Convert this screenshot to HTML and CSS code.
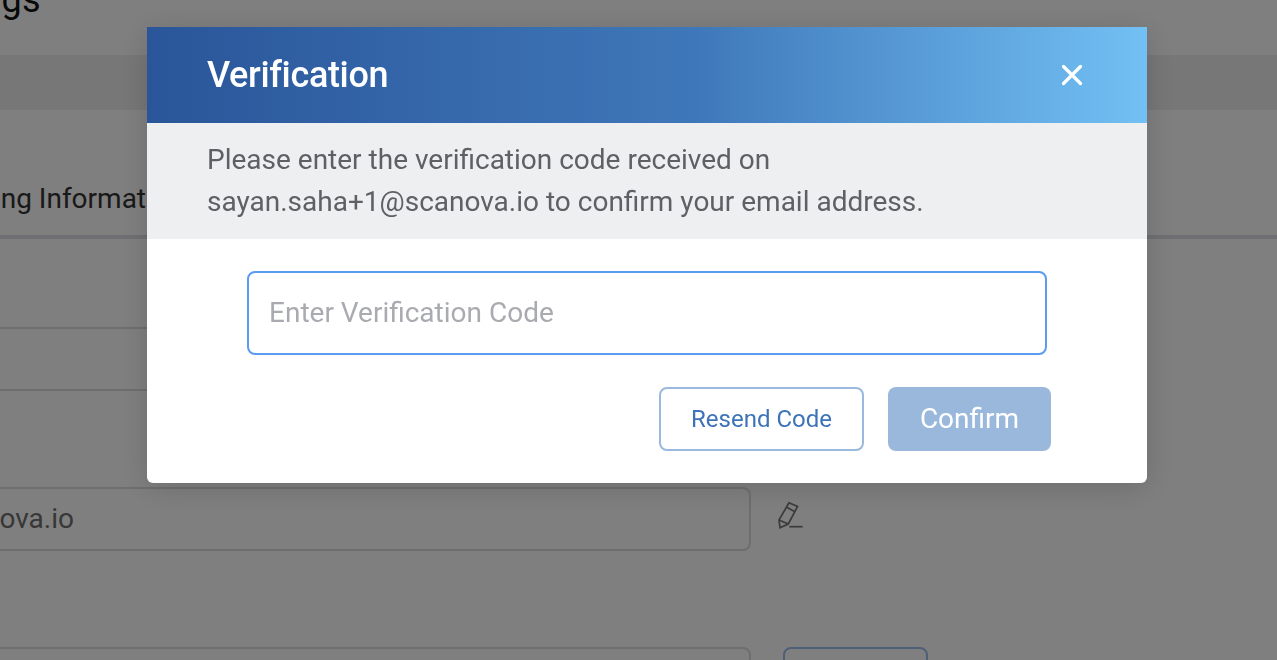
FILE: index.html
```html
<!DOCTYPE html>
<html lang="en">
<head>
  <meta charset="UTF-8">
  <title>Verification</title>
  <link rel="stylesheet" href="styles.css">
</head>
<body>
  <div class="page">
    <h1 class="page-title">Settings</h1>
    <div class="band"></div>
    <div class="tabs"><span class="tab">Billing Information</span></div>
    <div class="fields">
      <div class="field-row">
        <div class="field"></div>
      </div>
      <div class="field-row">
        <div class="field">sayan.saha+1@scanova.io</div>
        <svg class="pencil" viewBox="0 0 26 28" width="26" height="28" fill="none" stroke="#767676" stroke-width="1.7">
          <path d="M11 0.8 L19.5 4.5 L10.3 22 L2 25.8 L1 18 Z"/>
          <path d="M8.7 5.3 L17 9.7"/>
          <path d="M1 18 L10.3 22"/>
          <path d="M11.3 24.7 H24.7"/>
        </svg>
      </div>
      <div class="field-row">
        <div class="field"></div>
        <div class="page-btn"></div>
      </div>
    </div>
  </div>

  <div class="scrim"></div>

  <div class="modal">
    <div class="modal-header">
      <h2 class="modal-title">Verification</h2>
      <svg class="close-icon" viewBox="0 0 22 22" width="22" height="22" stroke="#fff" stroke-width="3.2" stroke-linecap="round">
        <path d="M2.5 2.5 L19.5 19.5 M19.5 2.5 L2.5 19.5"/>
      </svg>
    </div>
    <div class="modal-info">
      Please enter the verification code received on<br>
      sayan.saha+1@scanova.io to confirm your email address.
    </div>
    <div class="modal-body">
      <input class="code-input" type="text" placeholder="Enter Verification Code">
      <div class="modal-actions">
        <button class="btn btn-outline">Resend Code</button>
        <button class="btn btn-solid">Confirm</button>
      </div>
    </div>
  </div>
</body>
</html>
```

FILE: styles.css
```css
* {
  margin: 0;
  padding: 0;
  box-sizing: border-box;
}

html, body {
  height: 100%;
  overflow: hidden;
}

body {
  background: #fff;
  font-family: Roboto, "Liberation Sans", sans-serif;
}

.page {
  height: 660px;
  overflow: hidden;
}

.page-title {
  height: 52px;
  margin-top: -27px;
  margin-left: -93px;
  font-size: 36px;
  font-weight: 400;
  line-height: 54px;
  letter-spacing: 0.3px;
  color: #111;
}

.band {
  height: 55px;
  margin-top: 30px;
  background: #eee;
}

.tabs {
  height: 129px;
  padding-top: 70px;
  margin-left: -44px;
  border-bottom: 4px solid #dfdfe6;
  font-size: 28px;
  line-height: 38px;
  color: #333;
}

.fields {
  display: flex;
  flex-direction: column;
  gap: 96px;
  padding-top: 88px;
}

.field-row {
  display: flex;
  align-items: flex-start;
  gap: 32px;
}

.field {
  width: 1031px;
  height: 64px;
  margin-left: -280px;
  flex-shrink: 0;
  padding-left: 20px;
  border: 2px solid #dddde2;
  border-radius: 8px;
  font-size: 28px;
  line-height: 60px;
  color: #6e6e6e;
  white-space: nowrap;
}

.pencil {
  margin-top: 15px;
  margin-left: -5px;
}

.page-btn {
  width: 145px;
  height: 64px;
  border: 2px solid #9bbfee;
  border-radius: 8px;
}

.scrim {
  position: fixed;
  inset: 0;
  background: rgba(0, 0, 0, 0.5);
}

.modal {
  position: fixed;
  top: 27px;
  left: 147px;
  width: 1000px;
  height: 456px;
  background: #fff;
  border-radius: 0 0 6px 6px;
  box-shadow: 0 5px 30px rgba(0, 0, 0, 0.15);
  overflow: hidden;
}

.modal-header {
  display: flex;
  align-items: center;
  justify-content: space-between;
  height: 96px;
  padding: 0 64px 0 60px;
  background: linear-gradient(90deg, #2a5599 0%, #3f78ba 55%, #72c0f4 100%);
}

.modal-title {
  font-size: 36px;
  font-weight: 500;
  letter-spacing: -0.35px;
  color: #fff;
}

.modal-info {
  height: 116px;
  padding: 16px 60px 0;
  background: #eeeff1;
  font-size: 28px;
  line-height: 42px;
  color: #5f6063;
}

.modal-body {
  padding: 32px 96px 0 100px;
}

.code-input {
  display: block;
  width: 800px;
  height: 84px;
  padding: 0 20px 2px;
  border: 2px solid #5b9bf0;
  border-radius: 8px;
  outline: none;
  font-family: inherit;
  font-size: 28px;
  color: #333;
}

.code-input::placeholder {
  color: #aaabb1;
  opacity: 1;
}

.modal-actions {
  display: flex;
  justify-content: flex-end;
  gap: 24px;
  margin-top: 32px;
}

.btn {
  height: 64px;
  border-radius: 8px;
  font-family: inherit;
}

.btn-outline {
  width: 205px;
  background: #fff;
  border: 2px solid #9ab9dc;
  font-size: 24px;
  color: #3d74b8;
}

.btn-solid {
  width: 163px;
  padding-bottom: 2px;
  background: #9ab8dc;
  border: none;
  font-size: 28px;
  color: #fff;
}
```
